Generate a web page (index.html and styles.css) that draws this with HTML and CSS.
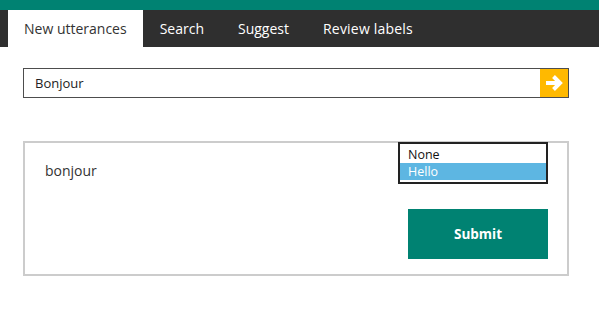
FILE: index.html
```html
<!DOCTYPE html>
<html lang="en">
<head>
    <meta charset="UTF-8">
    <meta name="viewport" content="width=device-width, initial-scale=1.0">
    <title>Utterances</title>
    <link rel="stylesheet" href="styles.css">
</head>
<body>
    <div class="topbar"></div>
    <nav class="tabs">
        <a class="tab active" href="#">New utterances</a>
        <a class="tab" href="#">Search</a>
        <a class="tab" href="#">Suggest</a>
        <a class="tab" href="#">Review labels</a>
    </nav>

    <div class="content">
        <div class="search">
            <input type="text" class="search-input" value="Bonjour">
            <button class="search-go" aria-label="Go">
                <svg width="20" height="18" viewBox="0 0 20 18">
                    <path d="M2 9 H15" stroke="#fff" stroke-width="4" fill="none"/>
                    <path d="M9.5 2.5 L16 9 L9.5 15.5" stroke="#fff" stroke-width="4" fill="none"/>
                </svg>
            </button>
        </div>

        <div class="card">
            <div class="utterance">bonjour</div>
            <div class="actions">
                <div class="listbox" role="listbox">
                    <div class="option">None</div>
                    <div class="option selected">Hello</div>
                </div>
                <button class="submit">Submit</button>
            </div>
        </div>
    </div>
</body>
</html>
```

FILE: styles.css
```css
body {
    font-family: "Open Sans", "Noto Sans", sans-serif;
    margin: 0;
    padding: 0;
    background: #fff;
    color: #333;
}
.topbar {
    height: 10px;
    background: #008272;
}
.tabs {
    display: flex;
    height: 37px;
    padding-left: 8px;
    background: #2f2f2f;
}
.tab {
    display: flex;
    align-items: center;
    padding: 0 16px;
    color: #fff;
    font-size: 14px;
    text-decoration: none;
}
.tab + .tab {
    padding: 0 17px;
}
.tab:last-child {
    letter-spacing: 0.2px;
}
.tab.active {
    background: #fff;
    color: #333;
}
.content {
    padding: 21px 30px 0 23px;
}
.search {
    display: flex;
    height: 30px;
    border: 1px solid #4d4d4d;
    box-sizing: border-box;
}
.search-input {
    flex: 1;
    border: none;
    outline: none;
    padding: 0 11px;
    font-family: inherit;
    font-size: 13px;
    color: #222;
}
.search-go {
    width: 28px;
    border: none;
    padding: 0;
    background: #ffb900;
    display: flex;
    align-items: center;
    justify-content: center;
}
.card {
    display: flex;
    justify-content: space-between;
    margin-top: 43px;
    height: 135px;
    border: 2px solid #ccc;
    box-sizing: border-box;
    padding: 0 19px 0 20px;
}
.utterance {
    margin-top: 18px;
    font-size: 14px;
    color: #333;
}
.actions {
    display: flex;
    flex-direction: column;
    align-items: flex-end;
}
.listbox {
    width: 150px;
    margin-top: -1px;
    border: 2px solid #222;
    box-sizing: border-box;
    padding: 2px 0;
    background: #fff;
    font-size: 12.5px;
}
.option {
    height: 17px;
    line-height: 17px;
    padding: 0 8px;
    color: #111;
}
.option.selected {
    background: #5db6e2;
    color: #fff;
}
.submit {
    margin-top: 25px;
    width: 140px;
    height: 50px;
    border: none;
    background: #008272;
    color: #fff;
    font-family: inherit;
    font-size: 13.5px;
    font-weight: bold;
}
```
